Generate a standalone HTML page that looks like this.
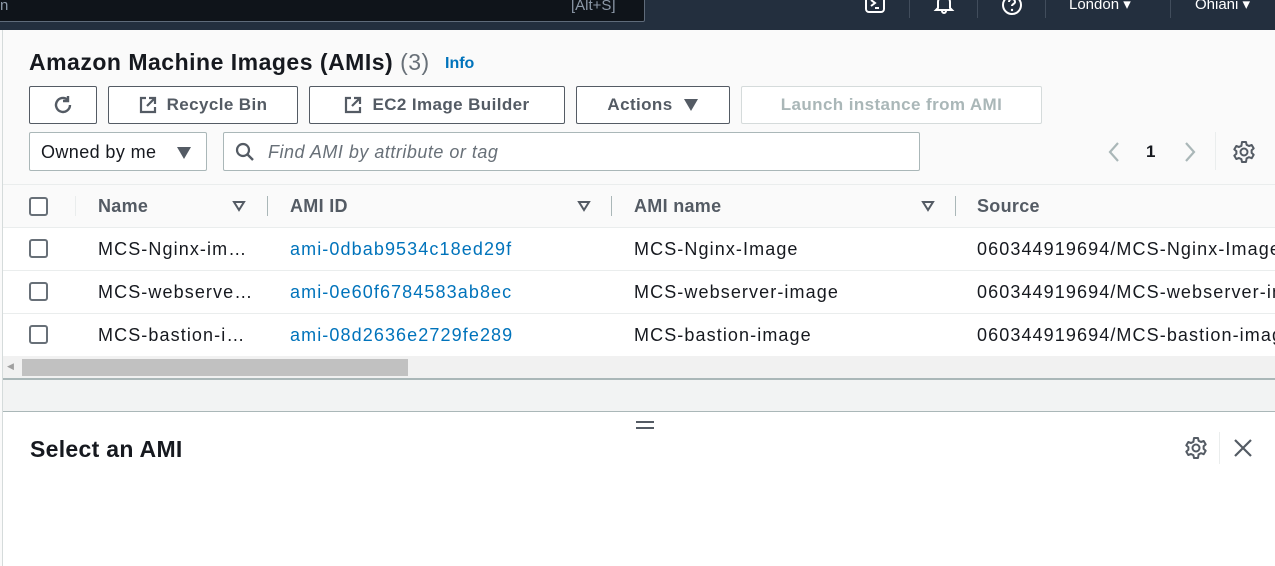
<!DOCTYPE html>
<html><head><meta charset="utf-8"><style>
*{box-sizing:border-box;margin:0;padding:0}
body{width:1275px;height:566px;overflow:hidden;background:#fafafa;font-family:"Liberation Sans",sans-serif;color:#16191f;position:relative}
.abs{position:absolute}
.top{left:0;top:0;width:1275px;height:30px;background:#232f3e}
.search{left:-5px;top:-2px;width:650px;height:24px;background:#0f141a;border:1px solid #5f6b7a;border-radius:2px;color:#8d99a8;font-size:15px}
.btn{position:absolute;top:86px;height:38px;border:1px solid #545b64;border-radius:2px;background:#fff;font-weight:bold;font-size:17px;color:#545b64;display:flex;align-items:center;justify-content:center;gap:10px;letter-spacing:.4px}
.txt{position:absolute;white-space:nowrap}
.row{position:absolute;left:3px;width:1272px;background:#fff;border-top:1px solid #eaeded}
.cb{position:absolute;left:29px;width:19px;height:19px;border:2px solid #687078;border-radius:3px;background:#fff}
.cell{position:absolute;font-size:18px;letter-spacing:1.1px;white-space:nowrap;max-width:298px;overflow:hidden}
.link{color:#0073bb}
.th{position:absolute;top:196px;font-size:18px;font-weight:bold;color:#545b64;letter-spacing:.3px}
.sep{position:absolute;width:1px;background:#d5dbdb}
</style></head><body>
<div class="abs top"></div>
<div class="abs search"><span class="txt" style="left:4px;top:-2px">n</span><span class="txt" style="left:575px;top:-2px">[Alt+S]</span></div>
<svg class="abs" style="left:864px;top:-4px" width="24" height="20" viewBox="0 0 24 20"><rect x="2" y="0" width="18" height="16" rx="3" fill="none" stroke="#fff" stroke-width="2"/><path d="M7 4l4 3-4 3M11 12h4" stroke="#fff" stroke-width="2" fill="none"/></svg>
<div class="sep" style="left:909px;top:0;height:18px;background:#414d5c"></div>
<svg class="abs" style="left:933px;top:-4px" width="22" height="20" viewBox="0 0 22 20"><path d="M5 12V6a6 6 0 0112 0v6l2 2H3z M9 15a2 2 0 004 0" stroke="#fff" stroke-width="2" fill="none"/></svg>
<div class="sep" style="left:977px;top:0;height:18px;background:#414d5c"></div>
<svg class="abs" style="left:1001px;top:-6px" width="22" height="22" viewBox="0 0 22 22"><circle cx="11" cy="11" r="9" stroke="#fff" stroke-width="2" fill="none"/><path d="M8 8a3 3 0 116 0c0 2-3 2-3 4" stroke="#fff" stroke-width="2" fill="none"/><circle cx="11" cy="16" r="1.2" fill="#fff"/></svg>
<div class="sep" style="left:1045px;top:0;height:18px;background:#414d5c"></div>
<span class="txt" style="left:1069px;top:-5px;color:#fff;font-size:15px">London ▾</span>
<div class="sep" style="left:1170px;top:0;height:18px;background:#414d5c"></div>
<span class="txt" style="left:1195px;top:-5px;color:#fff;font-size:15px">Ohiani ▾</span>
<div class="sep" style="left:2px;top:30px;height:536px;background:#d5dbdb"></div>

<span class="txt" style="left:29px;top:49px;font-size:23px;font-weight:bold;color:#16191f;letter-spacing:.5px">Amazon Machine Images (AMIs) <span style="font-weight:normal;color:#687078">(3)</span></span>
<span class="txt" style="left:445px;top:55px;font-size:16px;font-weight:bold;color:#0073bb">Info</span>

<div class="btn" style="left:29px;width:68px"><svg width="22" height="22" viewBox="0 0 22 22"><path d="M18 11a7 7 0 11-2.5-5.4" stroke="#545b64" stroke-width="2.4" fill="none"/><path d="M16 2v5h-5" stroke="#545b64" stroke-width="2.4" fill="none"/></svg></div>
<div class="btn" style="left:108px;width:190px"><svg width="18" height="18" viewBox="0 0 18 18"><path d="M7 2H2v14h14v-5M10 2h6v6M16 2L8 10" stroke="#545b64" stroke-width="2.2" fill="none"/></svg>Recycle Bin</div>
<div class="btn" style="left:309px;width:256px"><svg width="18" height="18" viewBox="0 0 18 18"><path d="M7 2H2v14h14v-5M10 2h6v6M16 2L8 10" stroke="#545b64" stroke-width="2.2" fill="none"/></svg>EC2 Image Builder</div>
<div class="btn" style="left:576px;width:154px">Actions <svg width="16" height="14" viewBox="0 0 16 14"><path d="M1 1h14L8 13z" fill="#545b64"/></svg></div>
<div class="btn" style="left:741px;width:301px;border-color:#d5dbdb;color:#aab7b8">Launch instance from AMI</div>

<div class="abs" style="left:29px;top:132px;width:178px;height:39px;border:1px solid #aab7b8;border-radius:2px;background:#fff"><span class="txt" style="left:11px;top:9px;font-size:18px;letter-spacing:.4px">Owned by me</span><svg class="abs" style="left:146px;top:13px" width="16" height="14" viewBox="0 0 16 14"><path d="M1 1h14L8 13z" fill="#545b64"/></svg></div>
<div class="abs" style="left:223px;top:132px;width:697px;height:39px;border:1px solid #aab7b8;border-radius:2px;background:#fff"><svg class="abs" style="left:11px;top:9px" width="20" height="20" viewBox="0 0 20 20"><circle cx="8" cy="8" r="6" stroke="#545b64" stroke-width="2.2" fill="none"/><path d="M12.5 12.5L18 18" stroke="#545b64" stroke-width="2.4"/></svg><span class="txt" style="left:44px;top:9px;font-size:18px;font-style:italic;color:#687078;letter-spacing:.5px">Find AMI by attribute or tag</span></div>

<svg class="abs" style="left:1106px;top:140px" width="16" height="24" viewBox="0 0 16 24"><path d="M12 3L4 12l8 9" stroke="#aab7b8" stroke-width="2.2" fill="none"/></svg>
<span class="txt" style="left:1146px;top:142px;font-size:17px;font-weight:bold">1</span>
<svg class="abs" style="left:1182px;top:140px" width="16" height="24" viewBox="0 0 16 24"><path d="M4 3l8 9-8 9" stroke="#aab7b8" stroke-width="2.2" fill="none"/></svg>
<div class="sep" style="left:1215px;top:132px;height:38px;background:#eaeded"></div>
<svg class="abs" style="left:1232px;top:140px" width="24" height="24" viewBox="0 0 24 24"><circle cx="12" cy="12" r="3.5" stroke="#545b64" stroke-width="2" fill="none"/><path d="M10 2h4l.6 2.8 2.4 1.2 2.7-1 2 3.4-2.1 1.9v2.6l2.1 1.9-2 3.4-2.7-1-2.4 1.2L14 22h-4l-.6-2.8-2.4-1.2-2.7 1-2-3.4 2.1-1.9v-2.6L2.3 9.4l2-3.4 2.7 1 2.4-1.2z" stroke="#545b64" stroke-width="2" fill="none" stroke-linejoin="round"/></svg>

<div class="abs" style="left:3px;top:184px;width:1272px;height:1px;background:#eaeded"></div>
<div class="cb" style="top:197px"></div>
<div class="sep" style="left:75px;top:196px;height:20px;background:#eaeded"></div>
<span class="th" style="left:98px">Name</span><svg class="abs" style="left:232px;top:200px" width="14" height="12" viewBox="0 0 14 12"><path d="M2 2h10L7 10z" fill="none" stroke="#545b64" stroke-width="2"/></svg>
<div class="sep" style="left:267px;top:196px;height:20px;background:#aab7b8"></div>
<span class="th" style="left:290px">AMI ID</span><svg class="abs" style="left:577px;top:200px" width="14" height="12" viewBox="0 0 14 12"><path d="M2 2h10L7 10z" fill="none" stroke="#545b64" stroke-width="2"/></svg>
<div class="sep" style="left:611px;top:196px;height:20px;background:#aab7b8"></div>
<span class="th" style="left:634px">AMI name</span><svg class="abs" style="left:921px;top:200px" width="14" height="12" viewBox="0 0 14 12"><path d="M2 2h10L7 10z" fill="none" stroke="#545b64" stroke-width="2"/></svg>
<div class="sep" style="left:955px;top:196px;height:20px;background:#aab7b8"></div>
<span class="th" style="left:977px">Source</span>

<div class="row" style="top:227px;height:43px"></div>
<div class="row" style="top:270px;height:43px"></div>
<div class="row" style="top:313px;height:43px"></div>
<div class="cb" style="top:239px"></div><div class="cb" style="top:282px"></div><div class="cb" style="top:325px"></div>
<span class="cell" style="left:98px;top:239px">MCS-Nginx-im…</span>
<span class="cell link" style="left:290px;top:239px">ami-0dbab9534c18ed29f</span>
<span class="cell" style="left:634px;top:239px">MCS-Nginx-Image</span>
<span class="cell" style="left:977px;top:239px">060344919694/MCS-Nginx-Image</span>
<span class="cell" style="left:98px;top:282px">MCS-webserve…</span>
<span class="cell link" style="left:290px;top:282px">ami-0e60f6784583ab8ec</span>
<span class="cell" style="left:634px;top:282px">MCS-webserver-image</span>
<span class="cell" style="left:977px;top:282px">060344919694/MCS-webserver-image</span>
<span class="cell" style="left:98px;top:325px">MCS-bastion-i…</span>
<span class="cell link" style="left:290px;top:325px">ami-08d2636e2729fe289</span>
<span class="cell" style="left:634px;top:325px">MCS-bastion-image</span>
<span class="cell" style="left:977px;top:325px">060344919694/MCS-bastion-image</span>

<div class="abs" style="left:3px;top:356px;width:1272px;height:22px;background:#f1f1f1"></div>
<div class="abs" style="left:22px;top:359px;width:386px;height:17px;background:#c1c1c1"></div>
<span class="txt" style="left:7px;top:361px;font-size:9px;color:#a0a0a0">◀</span>
<div class="abs" style="left:3px;top:378px;width:1272px;height:2px;background:#aab7b8"></div>
<div class="abs" style="left:3px;top:380px;width:1272px;height:31px;background:#f2f3f3"></div>
<div class="abs" style="left:3px;top:411px;width:1272px;height:1px;background:#aab7b8"></div>
<div class="abs" style="left:3px;top:412px;width:1272px;height:154px;background:#fff"></div>
<div class="abs" style="left:636px;top:421px;width:18px;height:2px;background:#545b64"></div>
<div class="abs" style="left:636px;top:427px;width:18px;height:2px;background:#545b64"></div>
<span class="txt" style="left:30px;top:436px;font-size:23px;font-weight:bold;letter-spacing:.3px">Select an AMI</span>
<svg class="abs" style="left:1184px;top:436px" width="24" height="24" viewBox="0 0 24 24"><circle cx="12" cy="12" r="3.5" stroke="#545b64" stroke-width="2" fill="none"/><path d="M10 2h4l.6 2.8 2.4 1.2 2.7-1 2 3.4-2.1 1.9v2.6l2.1 1.9-2 3.4-2.7-1-2.4 1.2L14 22h-4l-.6-2.8-2.4-1.2-2.7 1-2-3.4 2.1-1.9v-2.6L2.3 9.4l2-3.4 2.7 1 2.4-1.2z" stroke="#545b64" stroke-width="2" fill="none" stroke-linejoin="round"/></svg>
<div class="sep" style="left:1219px;top:432px;height:32px;background:#eaeded"></div>
<svg class="abs" style="left:1233px;top:438px" width="20" height="20" viewBox="0 0 20 20"><path d="M2 2l16 16M18 2L2 18" stroke="#545b64" stroke-width="2.2"/></svg>
</body></html>
